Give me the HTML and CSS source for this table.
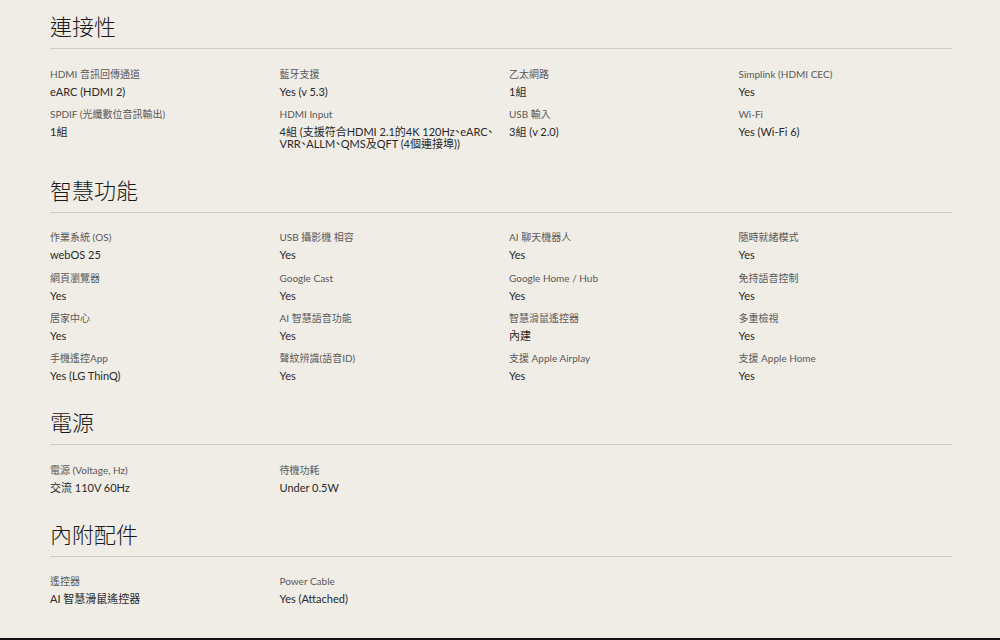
FILE: index.html
```html
<!DOCTYPE html>
<html lang="zh-Hant">
<head>
<meta charset="utf-8">
<title>規格</title>
<link rel="stylesheet" href="styles.css">
</head>
<body>
<main class="specs">
  <section class="spec-section">
    <h2 class="spec-title">連接性</h2>
    <dl class="spec-grid">
      <div class="spec-item"><dt>HDMI 音訊回傳通道</dt><dd>eARC (HDMI 2)</dd></div>
      <div class="spec-item"><dt>藍牙支援</dt><dd>Yes (v 5.3)</dd></div>
      <div class="spec-item"><dt>乙太網路</dt><dd>1組</dd></div>
      <div class="spec-item"><dt>Simplink (HDMI CEC)</dt><dd>Yes</dd></div>
      <div class="spec-item"><dt>SPDIF (光纖數位音訊輸出)</dt><dd>1組</dd></div>
      <div class="spec-item"><dt>HDMI Input</dt><dd>4組 (支援符合HDMI 2.1的4K 120Hz、eARC、VRR、ALLM、QMS及QFT (4個連接埠))</dd></div>
      <div class="spec-item"><dt>USB 輸入</dt><dd>3組 (v 2.0)</dd></div>
      <div class="spec-item"><dt>Wi-Fi</dt><dd>Yes (Wi-Fi 6)</dd></div>
    </dl>
  </section>
  <section class="spec-section">
    <h2 class="spec-title">智慧功能</h2>
    <dl class="spec-grid">
      <div class="spec-item"><dt>作業系統 (OS)</dt><dd>webOS 25</dd></div>
      <div class="spec-item"><dt>USB 攝影機 相容</dt><dd>Yes</dd></div>
      <div class="spec-item"><dt>AI 聊天機器人</dt><dd>Yes</dd></div>
      <div class="spec-item"><dt>隨時就緒模式</dt><dd>Yes</dd></div>
      <div class="spec-item"><dt>網頁瀏覽器</dt><dd>Yes</dd></div>
      <div class="spec-item"><dt>Google Cast</dt><dd>Yes</dd></div>
      <div class="spec-item"><dt>Google Home / Hub</dt><dd>Yes</dd></div>
      <div class="spec-item"><dt>免持語音控制</dt><dd>Yes</dd></div>
      <div class="spec-item"><dt>居家中心</dt><dd>Yes</dd></div>
      <div class="spec-item"><dt>AI 智慧語音功能</dt><dd>Yes</dd></div>
      <div class="spec-item"><dt>智慧滑鼠遙控器</dt><dd>內建</dd></div>
      <div class="spec-item"><dt>多重檢視</dt><dd>Yes</dd></div>
      <div class="spec-item"><dt>手機遙控App</dt><dd>Yes (LG ThinQ)</dd></div>
      <div class="spec-item"><dt>聲紋辨識(語音ID)</dt><dd>Yes</dd></div>
      <div class="spec-item"><dt>支援 Apple Airplay</dt><dd>Yes</dd></div>
      <div class="spec-item"><dt>支援 Apple Home</dt><dd>Yes</dd></div>
    </dl>
  </section>
  <section class="spec-section">
    <h2 class="spec-title">電源</h2>
    <dl class="spec-grid">
      <div class="spec-item"><dt>電源 (Voltage, Hz)</dt><dd>交流 110V 60Hz</dd></div>
      <div class="spec-item"><dt>待機功耗</dt><dd>Under 0.5W</dd></div>
    </dl>
  </section>
  <section class="spec-section">
    <h2 class="spec-title">內附配件</h2>
    <dl class="spec-grid">
      <div class="spec-item"><dt>遙控器</dt><dd>AI 智慧滑鼠遙控器</dd></div>
      <div class="spec-item"><dt>Power Cable</dt><dd>Yes (Attached)</dd></div>
    </dl>
  </section>
</main>
<footer class="page-footer"></footer>
</body>
</html>
```

FILE: styles.css
```css
html, body {
  margin: 0;
  padding: 0;
}
body {
  background: #f0ece6;
  font-family: "Lato", "Noto Sans CJK TC", sans-serif;
  color: #222;
}
.specs {
  padding: 12px 48px 33px 50px;
}
.spec-section + .spec-section {
  margin-top: 26px;
}
.spec-title {
  margin: 0;
  font-family: "Noto Sans CJK TC", sans-serif;
  font-size: 22px;
  font-weight: 300;
  line-height: 26px;
  color: #1a1a1a;
  padding-bottom: 10px;
  border-bottom: 1px solid #cfcbc6;
}
.spec-grid {
  margin: 17.5px -16px 0 0;
  display: grid;
  grid-template-columns: repeat(4, 1fr);
  row-gap: 9.3px;
}
.spec-item {
  padding-right: 12px;
}
.spec-item dt {
  font-size: 10px;
  line-height: 14px;
  color: #5a5a5a;
}
.spec-item dd {
  margin: 5px 0 0;
  font-size: 11px;
  line-height: 12px;
  color: #2a2a2a;
  font-feature-settings: "halt";
}
.page-footer {
  height: 20px;
  background: #111;
}
```
